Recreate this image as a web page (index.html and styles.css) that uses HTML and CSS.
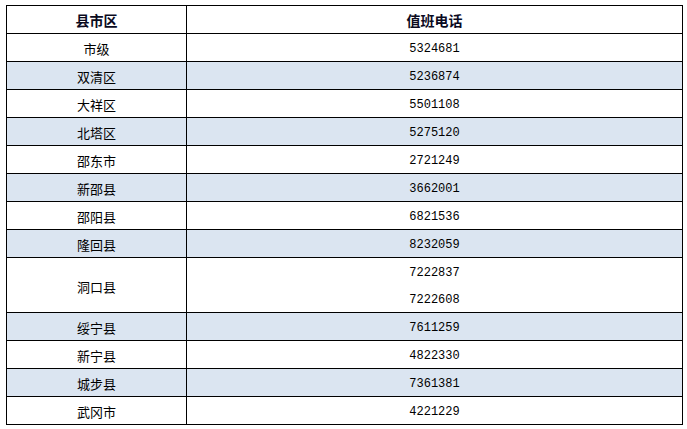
FILE: index.html
```html
<!DOCTYPE html>
<html lang="zh-CN">
<head>
<meta charset="utf-8">
<link rel="stylesheet" href="styles.css">
</head>
<body>
<div class="page">
<table class="duty">
  <thead>
    <tr><th class="c1">县市区</th><th class="c2">值班电话</th></tr>
  </thead>
  <tbody>
    <tr><td>市级</td><td class="num">5324681</td></tr>
    <tr class="alt"><td>双清区</td><td class="num">5236874</td></tr>
    <tr><td>大祥区</td><td class="num">5501108</td></tr>
    <tr class="alt"><td>北塔区</td><td class="num">5275120</td></tr>
    <tr><td>邵东市</td><td class="num">2721249</td></tr>
    <tr class="alt"><td>新邵县</td><td class="num">3662001</td></tr>
    <tr><td>邵阳县</td><td class="num">6821536</td></tr>
    <tr class="alt"><td>隆回县</td><td class="num">8232059</td></tr>
    <tr class="tall"><td>洞口县</td><td class="num multi"><div class="line">7222837</div><div class="line">7222608</div></td></tr>
    <tr class="alt"><td>绥宁县</td><td class="num">7611259</td></tr>
    <tr><td>新宁县</td><td class="num">4822330</td></tr>
    <tr class="alt"><td>城步县</td><td class="num">7361381</td></tr>
    <tr><td>武冈市</td><td class="num">4221229</td></tr>
  </tbody>
</table>
</div>
</body>
</html>
```
FILE: styles.css
```css
html, body {
  margin: 0;
  padding: 0;
  background: #ffffff;
}
.page {
  padding: 5px 0 0 6px;
}
.duty {
  border-collapse: collapse;
  width: 677px;
  table-layout: fixed;
  font-family: "Noto Sans CJK SC", "Noto Sans", sans-serif;
  font-size: 13px;
  color: #000000;
}
.duty th, .duty td {
  border: 1px solid #000000;
  padding: 0;
  height: 27px;
  line-height: 27px;
  text-align: center;
  vertical-align: middle;
}
.duty td {
  padding-top: 2px;
  height: 25px;
  line-height: 25px;
}
.duty th {
  font-weight: bold;
  font-size: 14px;
  color: #0a0a1e;
  padding-top: 1px;
  height: 26px;
  line-height: 26px;
}
.c1 { width: 179px; }
.duty .num {
  font-family: "Liberation Mono", "Noto Sans CJK SC", monospace;
  font-size: 12px;
  padding-top: 4px;
  height: 23px;
  line-height: 23px;
}
.alt td {
  background: #dbe5f1;
}
.tall td {
  height: 52px;
}
.duty .multi {
  padding-top: 4px;
  height: 50px;
}
.line {
  height: 27px;
  line-height: 23px;
}
.line + .line {
  height: 23px;
}
```
